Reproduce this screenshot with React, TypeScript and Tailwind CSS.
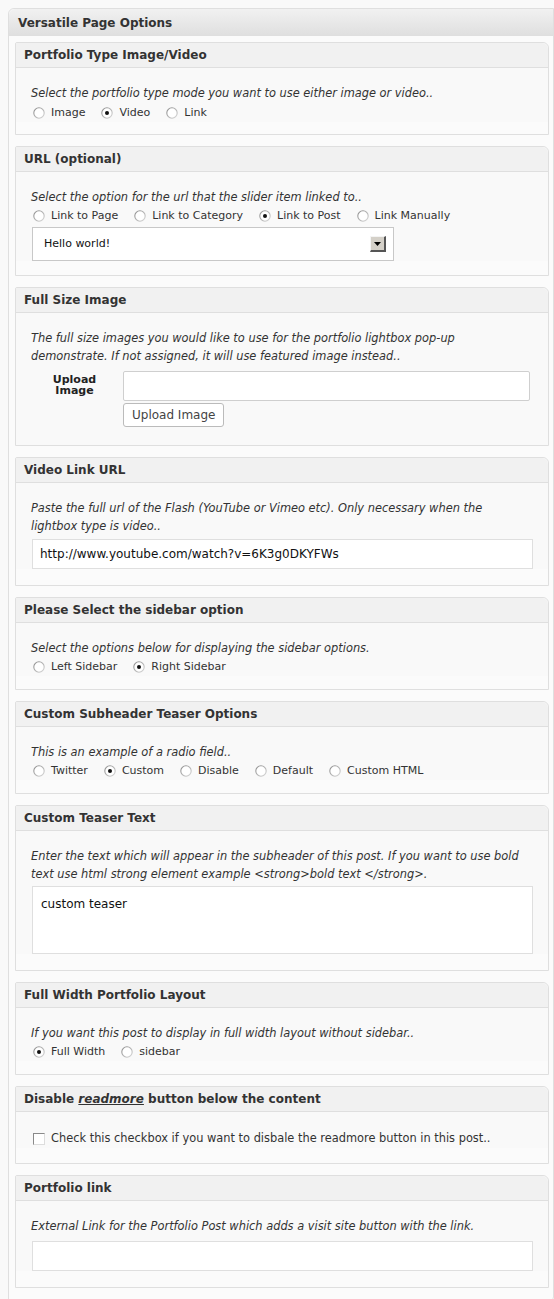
import React from "react";

const font = { fontFamily: '"DejaVu Sans", Verdana, sans-serif' };

function Radio({ label, checked }: { label: string; checked?: boolean }) {
  return (
    <label className="flex items-center mr-[16px] text-[11px]">
      <svg width="12" height="12" viewBox="0 0 12 12" className="mr-[6px] shrink-0">
        <defs>
          <linearGradient id="rb" x1="0" y1="0" x2="1" y2="1">
            <stop offset="0" stopColor="#8a8a8a" />
            <stop offset="1" stopColor="#d8d8d8" />
          </linearGradient>
        </defs>
        <circle cx="6" cy="6" r="5.2" fill="#fff" stroke="url(#rb)" strokeWidth="1.1" />
        {checked && <circle cx="6" cy="6" r="2" fill="#111" />}
      </svg>
      <span>{label}</span>
    </label>
  );
}

function Section({ title, children }: { title: React.ReactNode; children: React.ReactNode }) {
  return (
    <div className="border border-[#dfdfdf] rounded-tr-[6px] rounded-tl-[2px] mb-[11px]">
      <div className="h-[25px] bg-[#f1f1f1] border-b border-[#dfdfdf] rounded-tr-[6px] pl-[8px] flex items-center text-[12px] font-bold text-[#333]">
        {title}
      </div>
      <div className="bg-[#f9f9f9] px-[15px] pt-[16px] text-[11.4px] text-[#333]">{children}</div>
    </div>
  );
}

// line breaks are placed by hand to follow the original wrapping
function Desc({ children }: { children: React.ReactNode }) {
  return <p className="italic leading-[18px] text-[#333] whitespace-nowrap">{children}</p>;
}

export default function App() {
  return (
    <div className="min-h-screen bg-[#f9f9f9] pt-[8px] pl-[8px]" style={font}>
      <div className="border-l border-t border-b border-r border-[#dfdfdf] rounded-tl-[6px] rounded-br-[4px] bg-[#fbfbfb] pb-[1px]">
        <div className="h-[27px] bg-gradient-to-b from-[#f1f1f1] to-[#dfdfdf] rounded-tl-[6px] pl-[9px] flex items-center text-[12px] font-bold text-[#333]">
          Versatile Page Options
        </div>
        <div className="pl-[6px] pr-[4px] pt-[6px]">
          <Section title="Portfolio Type Image/Video">
            <Desc>Select the portfolio type mode you want to use either image or video..</Desc>
            <div className="flex mt-[2px] h-[18px] pl-[2px] mb-[12px]">
              <Radio label="Image" />
              <Radio label="Video" checked />
              <Radio label="Link" />
            </div>
          </Section>

          <Section title="URL (optional)">
            <Desc>Select the option for the url that the slider item linked to..</Desc>
            <div className="flex mt-[1px] h-[18px] pl-[2px]">
              <Radio label="Link to Page" />
              <Radio label="Link to Category" />
              <Radio label="Link to Post" checked />
              <Radio label="Link Manually" />
            </div>
            <div className="mt-[2px] ml-[1px] w-[362px] h-[34px] border border-[#c8c8c8] bg-white flex items-center pl-[11px] pr-[7px] mb-[14px]">
              <span className="flex-1 text-[11px] text-[#111]">Hello world!</span>
              <div className="w-[16px] h-[16px] bg-[#d4d0c8] border-t border-l border-[#f4f4f4] border-r-2 border-b-2 border-r-[#555] border-b-[#555] flex items-center justify-center">
                <svg width="7" height="4" viewBox="0 0 7 4">
                  <path d="M0 0h7L3.5 4z" fill="#000" />
                </svg>
              </div>
            </div>
          </Section>

          <Section title="Full Size Image">
            <Desc>
              The full size images you would like to use for the portfolio lightbox pop-up
              <br />
              demonstrate. If not assigned, it will use featured image instead..
            </Desc>
            <div className="flex mt-[6px] pb-[18px]">
              <div className="w-[92px] pt-[3px] text-center font-bold text-[11px] leading-[11px] text-[#222] pr-[5px]">
                Upload
                <br />
                Image
              </div>
              <div className="flex-1 pr-[3px]">
                <div className="h-[30px] border border-[#cfcfcf] bg-white rounded-[2px]" />
                <button className="mt-[2px] h-[24px] px-[8px] border border-[#bbb] rounded-[3px] bg-white text-[12px] text-[#444]">
                  Upload Image
                </button>
              </div>
            </div>
          </Section>

          <Section title="Video Link URL">
            <Desc>
              Paste the full url of the Flash (YouTube or Vimeo etc). Only necessary when the
              <br />
              lightbox type is video..
            </Desc>
            <div className="mt-[4px] ml-[1px] h-[30px] border border-[#dfdfdf] bg-white flex items-center pl-[7px] text-[12px] text-[#111] mb-[16px]">
              http://www.youtube.com/watch?v=6K3g0DKYFWs
            </div>
          </Section>

          <Section title="Please Select the sidebar option">
            <Desc>Select the options below for displaying the sidebar options.</Desc>
            <div className="flex mt-[1px] h-[18px] pl-[2px] mb-[13px]">
              <Radio label="Left Sidebar" />
              <Radio label="Right Sidebar" checked />
            </div>
          </Section>

          <Section title="Custom Subheader Teaser Options">
            <Desc>This is an example of a radio field..</Desc>
            <div className="flex mt-[1px] h-[18px] pl-[2px] mb-[13px]">
              <Radio label="Twitter" />
              <Radio label="Custom" checked />
              <Radio label="Disable" />
              <Radio label="Default" />
              <Radio label="Custom HTML" />
            </div>
          </Section>

          <Section title="Custom Teaser Text">
            <Desc>
              Enter the text which will appear in the subheader of this post. If you want to use bold
              <br />
              text use html strong element example &lt;strong&gt;bold text &lt;/strong&gt;.
            </Desc>
            <div className="mt-[3px] ml-[1px] h-[68px] border border-[#dfdfdf] bg-white pl-[8px] pt-[8px] text-[12px] text-[#111] mb-[16px]">
              custom teaser
            </div>
          </Section>

          <Section title="Full Width Portfolio Layout">
            <Desc>If you want this post to display in full width layout without sidebar..</Desc>
            <div className="flex mt-[1px] h-[18px] pl-[2px] mb-[13px]">
              <Radio label="Full Width" checked />
              <Radio label="sidebar" />
            </div>
          </Section>

          <Section
            title={
              <span>
                Disable <em className="underline">readmore</em> button below the content
              </span>
            }
          >
            <div className="flex items-center h-[18px] pl-[2px] mt-[2px] mb-[15px]">
              <span className="w-[12px] h-[12px] border border-[#8a8a8a] border-r-[#ddd] border-b-[#ddd] bg-white mr-[6px]" />
              <span>Check this checkbox if you want to disbale the readmore button in this post..</span>
            </div>
          </Section>

          <Section title="Portfolio link">
            <Desc>External Link for the Portfolio Post which adds a visit site button with the link.</Desc>
            <div className="mt-[6px] ml-[1px] h-[30px] border border-[#dfdfdf] bg-white mb-[16px]" />
          </Section>
        </div>
      </div>
    </div>
  );
}
